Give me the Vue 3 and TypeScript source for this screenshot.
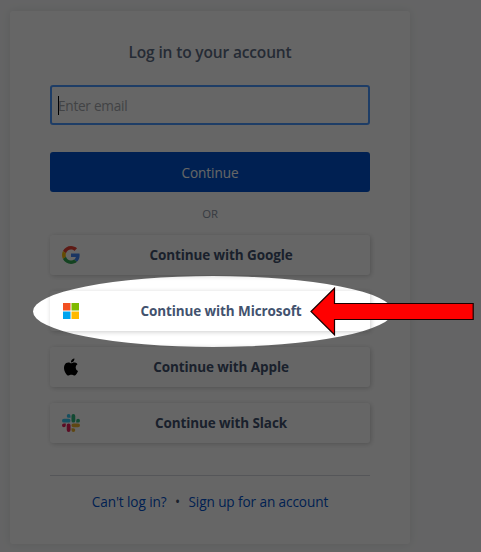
<script setup lang="ts">
interface Provider {
  id: string
  label: string
}

const providers: Provider[] = [
  { id: 'google', label: 'Continue with Google' },
  { id: 'microsoft', label: 'Continue with Microsoft' },
  { id: 'apple', label: 'Continue with Apple' },
  { id: 'slack', label: 'Continue with Slack' },
]
</script>

<template>
  <div class="page">
    <main class="card">
      <h1 class="title">Log in to your account</h1>
      <div class="field"><span class="caret"></span><span class="placeholder">Enter email</span></div>
      <button class="primary" type="button">Continue</button>
      <div class="or">OR</div>
      <div class="providers">
        <button v-for="p in providers" :key="p.id" class="provider" :class="p.id" type="button">
          <svg v-if="p.id === 'google'" class="icon" viewBox="0 0 48 48">
            <path fill="#EA4335" d="M24 9.5c3.54 0 6.71 1.22 9.21 3.6l6.85-6.85C35.9 2.38 30.47 0 24 0 14.62 0 6.51 5.38 2.56 13.22l7.98 6.19C12.43 13.72 17.74 9.5 24 9.5z" />
            <path fill="#4285F4" d="M46.98 24.55c0-1.57-.15-3.09-.38-4.55H24v9.02h12.94c-.58 2.96-2.26 5.48-4.78 7.18l7.73 6c4.51-4.18 7.09-10.36 7.09-17.65z" />
            <path fill="#FBBC05" d="M10.53 28.59c-.48-1.45-.76-2.99-.76-4.59s.27-3.14.76-4.59l-7.98-6.19C.92 16.46 0 20.12 0 24c0 3.88.92 7.54 2.56 10.78l7.97-6.19z" />
            <path fill="#34A853" d="M24 48c6.48 0 11.93-2.13 15.89-5.81l-7.73-6c-2.15 1.45-4.92 2.3-8.16 2.3-6.26 0-11.57-4.22-13.47-9.91l-7.98 6.19C6.51 42.62 14.62 48 24 48z" />
          </svg>
          <svg v-else-if="p.id === 'microsoft'" class="icon" viewBox="0 0 18 18">
            <path fill="#F25022" d="M1 1h7.5v7.5H1z" />
            <path fill="#7FBA00" d="M9.5 1H17v7.5H9.5z" />
            <path fill="#00A4EF" d="M1 9.5h7.5V17H1z" />
            <path fill="#FFB900" d="M9.5 9.5H17V17H9.5z" />
          </svg>
          <svg v-else-if="p.id === 'apple'" class="icon" viewBox="-0.6 -0.6 25.2 25.2">
            <path fill="#000" d="M12.152 6.896c-.948 0-2.415-1.078-3.96-1.04-2.04.027-3.91 1.183-4.961 3.014-2.117 3.675-.546 9.103 1.519 12.09 1.013 1.454 2.208 3.09 3.792 3.039 1.52-.065 2.09-.987 3.935-.987 1.831 0 2.35.987 3.96.948 1.637-.026 2.676-1.48 3.676-2.948 1.156-1.688 1.636-3.325 1.662-3.415-.039-.013-3.182-1.221-3.22-4.857-.026-3.04 2.48-4.494 2.597-4.559-1.429-2.09-3.623-2.324-4.39-2.376-2-.156-3.675 1.09-4.61 1.09zM15.53 3.83c.843-1.012 1.4-2.427 1.245-3.83-1.207.052-2.662.805-3.532 1.818-.78.896-1.454 2.338-1.273 3.714 1.338.104 2.715-.688 3.559-1.701" />
          </svg>
          <svg v-else class="icon" viewBox="0 0 24 24">
            <path fill="#E01E5A" d="M5.042 15.165a2.528 2.528 0 0 1-2.52 2.523A2.528 2.528 0 0 1 0 15.165a2.527 2.527 0 0 1 2.522-2.52h2.52v2.52zM6.313 15.165a2.527 2.527 0 0 1 2.521-2.52 2.527 2.527 0 0 1 2.521 2.52v6.313A2.528 2.528 0 0 1 8.834 24a2.528 2.528 0 0 1-2.521-2.522v-6.313z" />
            <path fill="#36C5F0" d="M8.834 5.042a2.528 2.528 0 0 1-2.521-2.52A2.528 2.528 0 0 1 8.834 0a2.528 2.528 0 0 1 2.521 2.522v2.52H8.834zM8.834 6.313a2.528 2.528 0 0 1 2.521 2.521 2.528 2.528 0 0 1-2.521 2.521H2.522A2.528 2.528 0 0 1 0 8.834a2.528 2.528 0 0 1 2.522-2.521h6.312z" />
            <path fill="#2EB67D" d="M18.956 8.834a2.528 2.528 0 0 1 2.522-2.521A2.528 2.528 0 0 1 24 8.834a2.528 2.528 0 0 1-2.522 2.521h-2.522V8.834zM17.688 8.834a2.528 2.528 0 0 1-2.523 2.521 2.527 2.527 0 0 1-2.52-2.521V2.522A2.527 2.527 0 0 1 15.165 0a2.528 2.528 0 0 1 2.523 2.522v6.312z" />
            <path fill="#ECB22E" d="M15.165 18.956a2.528 2.528 0 0 1 2.523 2.522A2.528 2.528 0 0 1 15.165 24a2.527 2.527 0 0 1-2.52-2.522v-2.522h2.52zM15.165 17.688a2.527 2.527 0 0 1-2.52-2.523 2.526 2.526 0 0 1 2.52-2.52h6.313A2.527 2.527 0 0 1 24 15.165a2.528 2.528 0 0 1-2.522 2.523h-6.313z" />
          </svg>
          <span class="label">{{ p.label }}</span>
        </button>
      </div>
      <footer class="links">
        <a>Can't log in?</a><span class="dot">•</span><a>Sign up for an account</a>
      </footer>
    </main>
    <svg class="spotlight" viewBox="0 0 481 552">
      <path fill="#000" fill-opacity="0.6" fill-rule="evenodd" d="M0 0H481V552H0ZM33 311.5a180 35.5 0 1 0 360 0a180 35.5 0 1 0 -360 0Z" />
      <path fill="#f00" stroke="#1c0000" stroke-width="1.2" d="M311 311.5L334.5 288.2V303.5H473.2V319.5H334.5V334.8Z" />
    </svg>
  </div>
</template>

<style>
body {
  margin: 0;
}
</style>

<style scoped>
.page {
  position: relative;
  box-sizing: border-box;
  width: 481px;
  height: 552px;
  padding: 11px 0 0 10px;
  overflow: hidden;
  background: #fafbfc;
  font-family: "Open Sans", "Noto Sans", sans-serif;
  font-size: 13.6px;
  letter-spacing: -0.1px;
  color: #42526e;
}
.card {
  box-sizing: border-box;
  width: 400px;
  height: 533px;
  padding: 29px 40px 0;
  border-radius: 3px;
  background: #fff;
  box-shadow: 0 0 10px rgba(0, 0, 0, 0.1);
}
.title {
  margin: 0;
  font-size: 15.5px;
  line-height: 24px;
  font-weight: 600;
  letter-spacing: -0.15px;
  text-align: center;
  color: #5e6c84;
}
.field {
  display: flex;
  align-items: center;
  box-sizing: border-box;
  height: 40px;
  margin-top: 21px;
  padding-left: 6px;
  border: 2px solid #4c9aff;
  border-radius: 3px;
  color: #a5a8ad;
}
.caret {
  width: 1px;
  height: 19px;
  margin-right: -1px;
  background: #000;
}
.placeholder {
  letter-spacing: -0.25px;
}
button {
  display: flex;
  align-items: center;
  justify-content: center;
  box-sizing: border-box;
  width: 100%;
  height: 40px;
  border: 0;
  border-radius: 3px;
  font: inherit;
  letter-spacing: inherit;
}
.primary {
  margin-top: 27px;
  background: #0052cc;
  color: #fff;
}
.or {
  margin-top: 14px;
  height: 16px;
  line-height: 16px;
  font-size: 11.3px;
  text-align: center;
  color: #8993a4;
}
.providers {
  display: grid;
  gap: 16px;
  margin-top: 13px;
}
.provider {
  padding: 0 12px;
  background: #fff;
  box-shadow: 1px 1px 5px rgba(0, 0, 0, 0.2);
  color: #42526e;
  font-weight: 700;
}
.icon {
  flex: none;
  width: 18px;
  height: 18px;
}
.label {
  flex: 1;
  padding-left: 4px;
  text-align: center;
  font-size: 13.5px;
}
.links {
  display: flex;
  justify-content: center;
  margin-top: 32px;
  padding-top: 16px;
  border-top: 1px solid #d5d8de;
  line-height: 20px;
  color: #0052cc;
}
.dot {
  width: 22px;
  text-align: center;
  color: #42526e;
}
.spotlight {
  position: absolute;
  inset: 0;
  width: 481px;
  height: 552px;
}
</style>
